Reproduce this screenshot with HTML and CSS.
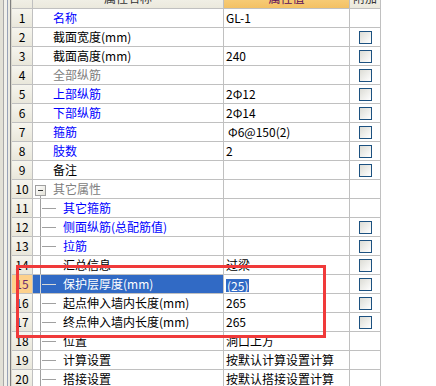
FILE: index.html
```html
<!DOCTYPE html>
<html lang="zh-CN">
<head>
    <meta charset="UTF-8">
    <title>属性编辑</title>
    <link rel="stylesheet" href="styles.css">
</head>
<body>
    <div class="sheet">
        <div class="side"></div>

        <!-- Property grid -->
        <div class="grid">
            <div class="row head">
                <div class="cell num"></div>
                <div class="cell name">属性名称</div>
                <div class="cell value">属性值</div>
                <div class="cell check">附加</div>
            </div>
            <div class="row">
                <div class="cell num">1</div>
                <div class="cell name blue">名称</div>
                <div class="cell value">GL-1</div>
                <div class="cell check"></div>
            </div>
            <div class="row">
                <div class="cell num">2</div>
                <div class="cell name">截面宽度(mm)</div>
                <div class="cell value"></div>
                <div class="cell check"><span class="box"></span></div>
            </div>
            <div class="row">
                <div class="cell num">3</div>
                <div class="cell name">截面高度(mm)</div>
                <div class="cell value">240</div>
                <div class="cell check"><span class="box"></span></div>
            </div>
            <div class="row">
                <div class="cell num">4</div>
                <div class="cell name gray">全部纵筋</div>
                <div class="cell value"></div>
                <div class="cell check"><span class="box"></span></div>
            </div>
            <div class="row">
                <div class="cell num">5</div>
                <div class="cell name blue">上部纵筋</div>
                <div class="cell value">2Φ12</div>
                <div class="cell check"><span class="box"></span></div>
            </div>
            <div class="row">
                <div class="cell num">6</div>
                <div class="cell name blue">下部纵筋</div>
                <div class="cell value">2Φ14</div>
                <div class="cell check"><span class="box"></span></div>
            </div>
            <div class="row">
                <div class="cell num">7</div>
                <div class="cell name blue">箍筋</div>
                <div class="cell value indent">Φ6@150(2)</div>
                <div class="cell check"><span class="box"></span></div>
            </div>
            <div class="row">
                <div class="cell num">8</div>
                <div class="cell name blue">肢数</div>
                <div class="cell value">2</div>
                <div class="cell check"><span class="box"></span></div>
            </div>
            <div class="row">
                <div class="cell num">9</div>
                <div class="cell name">备注</div>
                <div class="cell value"></div>
                <div class="cell check"><span class="box"></span></div>
            </div>
            <div class="row">
                <div class="cell num">10</div>
                <div class="cell name gray group"><span class="fold"></span>其它属性</div>
                <div class="cell value"></div>
                <div class="cell check"></div>
            </div>
            <div class="row">
                <div class="cell num">11</div>
                <div class="cell name blue leaf">其它箍筋</div>
                <div class="cell value"></div>
                <div class="cell check"></div>
            </div>
            <div class="row">
                <div class="cell num">12</div>
                <div class="cell name blue leaf">侧面纵筋(总配筋值)</div>
                <div class="cell value"></div>
                <div class="cell check"><span class="box"></span></div>
            </div>
            <div class="row">
                <div class="cell num">13</div>
                <div class="cell name blue leaf">拉筋</div>
                <div class="cell value"></div>
                <div class="cell check"><span class="box"></span></div>
            </div>
            <div class="row">
                <div class="cell num">14</div>
                <div class="cell name leaf">汇总信息</div>
                <div class="cell value">过梁</div>
                <div class="cell check"><span class="box"></span></div>
            </div>
            <div class="row selected">
                <div class="cell num">15</div>
                <div class="cell name leaf">保护层厚度(mm)</div>
                <div class="cell value"><span class="pick">(25)</span></div>
                <div class="cell check"><span class="box"></span></div>
            </div>
            <div class="row">
                <div class="cell num">16</div>
                <div class="cell name leaf">起点伸入墙内长度(mm)</div>
                <div class="cell value">265</div>
                <div class="cell check"><span class="box"></span></div>
            </div>
            <div class="row">
                <div class="cell num">17</div>
                <div class="cell name leaf">终点伸入墙内长度(mm)</div>
                <div class="cell value">265</div>
                <div class="cell check"><span class="box"></span></div>
            </div>
            <div class="row">
                <div class="cell num">18</div>
                <div class="cell name leaf">位置</div>
                <div class="cell value">洞口上方</div>
                <div class="cell check"></div>
            </div>
            <div class="row">
                <div class="cell num">19</div>
                <div class="cell name leaf">计算设置</div>
                <div class="cell value">按默认计算设置计算</div>
                <div class="cell check"></div>
            </div>
            <div class="row">
                <div class="cell num">20</div>
                <div class="cell name leaf">搭接设置</div>
                <div class="cell value">按默认搭接设置计算</div>
                <div class="cell check"></div>
            </div>
        </div>

        <!-- Red highlight drawn over rows 15-17 -->
        <div class="mark"></div>
    </div>
</body>
</html>
```

FILE: styles.css
```css
html, body {
    height: 386px;
    overflow: hidden;
}

body {
    margin: 0;
    background: #fff;
    font-family: "Noto Sans CJK SC", sans-serif;
    font-size: 12px;
    color: #000;
}

.sheet {
    position: relative;
    display: flex;
    height: 386px;
}

/* Window frame strip on the left */
.side {
    width: 12px;
    flex-shrink: 0;
    background: linear-gradient(to right,
        #e2e0d6 0 3px, #a9a9a9 3px 4px, #f1f0ea 4px 7px,
        #98a2b6 7px 8px, #ecebe3 8px 10px, #7f7f7f 10px 11px, #d8d6cc 11px 12px);
}

/* Property grid */
.grid {
    flex-shrink: 0;
}

.row {
    display: grid;
    grid-template-columns: 21px 191px 126px 31px;
    height: 19px;
}

.cell {
    position: relative;
    box-sizing: border-box;
    border-right: 1px solid #c0c0c0;
    border-bottom: 1px solid #c0c0c0;
    line-height: 18px;
    white-space: nowrap;
    overflow: hidden;
}

.head {
    height: 21px;
    margin-top: -12px;
}

.head .cell {
    line-height: 20px;
    text-align: center;
    padding: 0;
    color: #333;
    background: linear-gradient(#f8f7f1, #ebe9dd);
}

.head .cell.value {
    color: #5a0a5a;
    background: linear-gradient(#fbd98f, #f3c164);
}

.num {
    text-align: center;
    background: linear-gradient(#f6f5ee, #e9e7db);
}

.name {
    padding-left: 20px;
}

.value {
    padding-left: 2px;
}

.value.indent {
    padding-left: 4px;
}

.blue {
    color: #0000ff;
}

.gray {
    color: #808080;
}

/* Tree lines */
.leaf {
    padding-left: 30px;
}

.leaf::before {
    content: "";
    position: absolute;
    left: 7px;
    top: 0;
    bottom: 0;
    border-left: 1px solid #a0a0a0;
}

.leaf::after {
    content: "";
    position: absolute;
    left: 9px;
    top: 9px;
    width: 14px;
    border-top: 1px solid #a0a0a0;
}

.group::before {
    content: "";
    position: absolute;
    left: 7px;
    top: 15px;
    bottom: 0;
    border-left: 1px solid #a0a0a0;
}

.fold {
    position: absolute;
    left: 2px;
    top: 5px;
    width: 11px;
    height: 11px;
    box-sizing: border-box;
    border: 1px solid #a0a0a0;
    background: linear-gradient(135deg, #fff, #e4e2d8);
    z-index: 1;
}

.fold::after {
    content: "";
    position: absolute;
    left: 2px;
    top: 4px;
    width: 5px;
    border-top: 1px solid #333;
}

/* Checkboxes */
.check {
    padding-left: 9px;
    padding-top: 3px;
}

.box {
    display: block;
    width: 13px;
    height: 13px;
    box-sizing: border-box;
    border: 1px solid #1c5180;
    background: linear-gradient(135deg, #dcdcd5, #fff);
}

/* Selected row */
.selected .num {
    background: #fdd18c;
    color: #6b2a6b;
}

.selected .name {
    background: #316ac5;
    color: #fff;
}

.selected .leaf::before,
.selected .leaf::after {
    border-color: #d8d8d8;
}

.pick {
    display: inline-block;
    line-height: 13px;
    padding: 0 1px;
    background: #316ac5;
    color: #fff;
    vertical-align: middle;
}

/* Red annotation frame */
.mark {
    position: absolute;
    left: 16px;
    top: 265px;
    width: 310px;
    height: 73px;
    box-sizing: border-box;
    border: 3px solid #f03a3a;
}
```
